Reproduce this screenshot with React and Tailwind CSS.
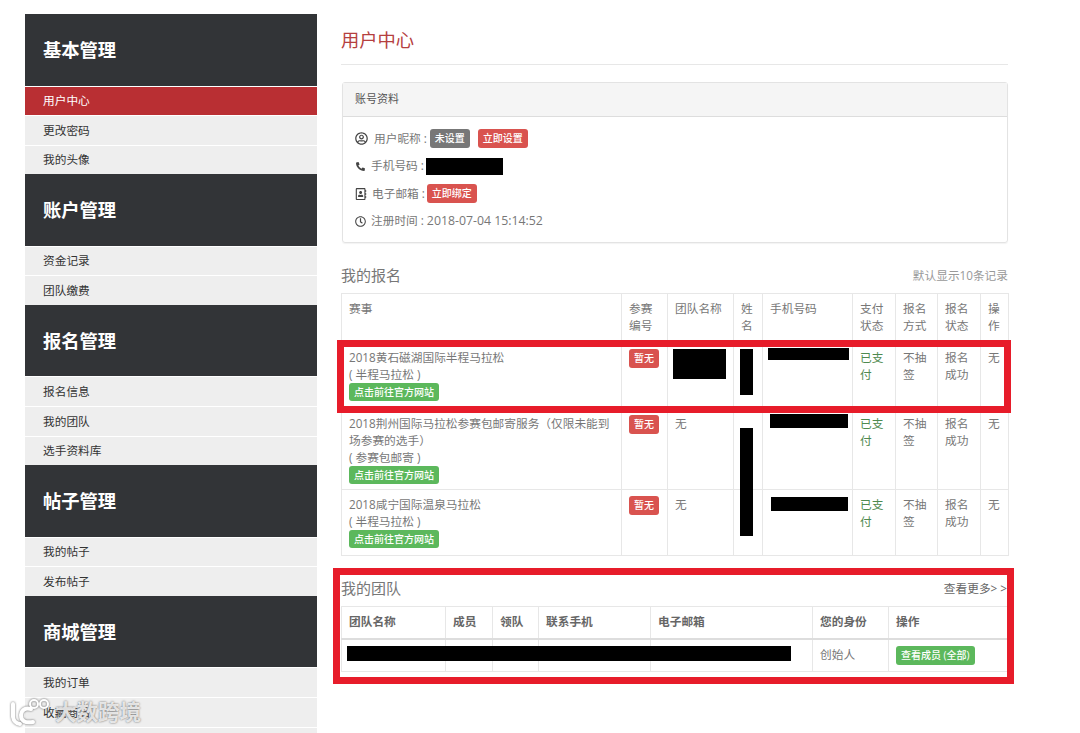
import React from 'react';
import { FaRegUserCircle, FaPhoneAlt, FaRegAddressBook, FaRegClock } from 'react-icons/fa';

const font = '[font-family:"Open_Sans","Noto_Sans_CJK_SC",sans-serif]';

const menu = [
  { title: '基本管理', items: ['用户中心', '更改密码', '我的头像'] },
  { title: '账户管理', items: ['资金记录', '团队缴费'] },
  { title: '报名管理', items: ['报名信息', '我的团队', '选手资料库'] },
  { title: '帖子管理', items: ['我的帖子', '发布帖子'] },
  { title: '商城管理', items: ['我的订单', '收藏商品', ''] },
];

const signups = [
  { name: ['2018黄石磁湖国际半程马拉松', '( 半程马拉松 )'], height: 'h-[66px]', team: true, phoneBar: 'w-[81px] h-[12px] ml-[-2px] mt-[-1px]', nameBar: true },
  { name: ['2018荆州国际马拉松参赛包邮寄服务（仅限未能到场参赛的选手）', '( 参赛包邮寄 )'], height: 'h-[81px]', phoneBar: 'w-[78px] h-[14px] mt-[-1px]' },
  { name: ['2018咸宁国际温泉马拉松', '( 半程马拉松 )'], height: 'h-[66px]', phoneBar: 'w-[77px] h-[14px] ml-px mt-[1px]' },
];

const Badge = ({ color, className = '', children }) => (
  <span className={`inline-block rounded-[3px] text-white text-[10px] leading-[18px] px-[5px] font-medium ${color} ${className}`}>
    {children}
  </span>
);

const Sidebar = () => (
  <aside className="w-[292px] shrink-0 mt-[14px]">
    {menu.map((group) => (
      <div key={group.title}>
        <div className="h-[71.5px] bg-[#323437] flex items-center pl-[18px] text-white text-[18.3px] font-bold">
          {group.title}
        </div>
        {group.items.map((item) => (
          <div
            key={item}
            className={`h-[28.6px] mt-[1px] pl-[18px] flex items-center text-[11.7px] ${
              item === '用户中心' ? 'bg-[#b92f33] text-white' : 'bg-[#eeeeee] text-[#333333]'
            }`}
          >
            {item}
          </div>
        ))}
      </div>
    ))}
  </aside>
);

const Account = () => (
  <div className="mt-[17px] border border-[#e3e3e3] rounded-[3px] shadow-[0_1px_1px_rgba(0,0,0,0.05)] h-[161px] ml-px">
    <div className="h-[34px] bg-[#f5f5f5] border-b border-[#dddddd] flex items-center pl-[12px] text-[11px] text-[#555555]">
      账号资料
    </div>
    <div className="pt-[8px] pl-[12px] text-[11.7px] text-[#777777]">
      <div className="h-[27.5px] flex items-center">
        <FaRegUserCircle className="text-[13px] text-[#444444] mr-[6px]" />
        用户昵称 :
        <Badge color="bg-[#777777]" className="ml-[3px] font-bold leading-[19px]">未设置</Badge>
        <Badge color="bg-[#d9534f]" className="ml-[8px] leading-[19px]">立即设置</Badge>
      </div>
      <div className="h-[27.5px] flex items-center">
        <FaPhoneAlt className="text-[9px] text-[#444444] ml-px mr-[6px]" />
        手机号码 :
        <span className="inline-block w-[77px] h-[17px] bg-black ml-[2px]" />
      </div>
      <div className="h-[27.5px] flex items-center">
        <FaRegAddressBook className="text-[12px] text-[#444444] mr-[5px]" />
        电子邮箱 :
        <Badge color="bg-[#d9534f]" className="ml-[2px] leading-[19px]">立即绑定</Badge>
      </div>
      <div className="h-[27.5px] flex items-center">
        <FaRegClock className="text-[11px] text-[#444444] mr-[5px]" />
        注册时间 :<span className="ml-[3px] text-[12.3px]">2018-07-04 15:14:52</span>
      </div>
    </div>
  </div>
);

const cell = 'border border-[#e7e7e7] align-top px-[7px] pt-[6px] pb-0 text-[11.7px] leading-[17px] font-normal text-left';

const SignupTable = () => (
  <table className="table-fixed w-[667px] text-[#777777]">
    <colgroup>
      <col className="w-[280px]" />
      <col className="w-[46px]" />
      <col className="w-[66px]" />
      <col className="w-[29px]" />
      <col className="w-[90px]" />
      <col className="w-[43px]" />
      <col className="w-[42px]" />
      <col className="w-[43px]" />
      <col className="w-[28px]" />
    </colgroup>
    <thead>
      <tr className="h-[49px]">
        <th className={cell}>赛事</th>
        <th className={cell}>参赛编号</th>
        <th className={cell}>团队名称</th>
        <th className={cell}>姓名</th>
        <th className={cell}>手机号码</th>
        <th className={cell}>支付状态</th>
        <th className={cell}>报名方式</th>
        <th className={cell}>报名状态</th>
        <th className={cell}>操作</th>
      </tr>
    </thead>
    <tbody>
      {signups.map((row) => (
        <tr key={row.name[0]} className={row.height}>
          <td className={cell}>
            <div>{row.name[0]}</div>
            <div>{row.name[1]}</div>
            <Badge color="bg-[#5cb85c]" className="block w-[90px] whitespace-nowrap">点击前往官方网站</Badge>
          </td>
          <td className={cell}>
            <Badge color="bg-[#d9534f]" className="font-bold align-top leading-[19px]">暂无</Badge>
          </td>
          <td className={cell}>
            {row.team ? <div className="w-[53px] h-[30px] bg-black ml-[-2px]" /> : '无'}
          </td>
          <td className={cell}>
            {row.nameBar ? <div className="w-[13px] h-[46px] bg-black ml-[-1px]" /> : null}
          </td>
          <td className={cell}>
            <div className={`bg-black ${row.phoneBar}`} />
          </td>
          <td className={`${cell} text-[#4f8a50]`}>已支付</td>
          <td className={cell}>不抽签</td>
          <td className={cell}>报名成功</td>
          <td className={cell}>无</td>
        </tr>
      ))}
    </tbody>
  </table>
);

const teamHead = 'border border-[#e7e7e7] border-b-2 border-b-[#dddddd] px-[7px] text-[11.7px] text-left font-bold text-[#666666]';
const teamCell = 'border border-[#e7e7e7] px-[7px] text-[11.7px] text-[#777777]';

const TeamTable = () => (
  <div className="relative">
    <table className="table-fixed w-[667px]">
      <colgroup>
        <col className="w-[104px]" />
        <col className="w-[47px]" />
        <col className="w-[46px]" />
        <col className="w-[112px]" />
        <col className="w-[162px]" />
        <col className="w-[76px]" />
        <col className="w-[120px]" />
      </colgroup>
      <thead>
        <tr className="h-[32px]">
          <th className={teamHead}>团队名称</th>
          <th className={teamHead}>成员</th>
          <th className={teamHead}>领队</th>
          <th className={teamHead}>联系手机</th>
          <th className={teamHead}>电子邮箱</th>
          <th className={teamHead}>您的身份</th>
          <th className={teamHead}>操作</th>
        </tr>
      </thead>
      <tbody>
        <tr className="h-[33px]">
          <td className={teamCell} />
          <td className={teamCell} />
          <td className={teamCell} />
          <td className={teamCell} />
          <td className={teamCell} />
          <td className={teamCell}>创始人</td>
          <td className={teamCell}>
            <Badge color="bg-[#5cb85c]" className="leading-[19px] px-[5px] whitespace-nowrap">查看成员 (全部)</Badge>
          </td>
        </tr>
      </tbody>
    </table>
    <div className="absolute left-[6px] top-[40px] w-[444px] h-[15px] bg-black" />
  </div>
);

const Watermark = () => (
  <div className="absolute left-[8px] top-[697px] flex items-center pointer-events-none">
    <svg width="46" height="30" viewBox="0 0 46 30" fill="none" strokeLinecap="round" className="drop-shadow-[0_0_1px_#666666]">
      <path d="M5 7 L5 20 Q6 26 12 27" stroke="#ffffff" strokeWidth="4" />
      <path d="M23 12 Q14 10 13 18 Q13 27 25 25" stroke="#ffffff" strokeWidth="4" />
      <circle cx="26" cy="7" r="4" stroke="#ffffff" strokeWidth="2" />
      <circle cx="36" cy="7" r="4" stroke="#ffffff" strokeWidth="2" />
    </svg>
    <span className="ml-[1px] text-[21.5px] leading-[28px] font-bold text-white/80 [text-shadow:0_0_2px_#555555]">大数跨境</span>
  </div>
);

const App = () => (
  <div className={`relative h-screen overflow-hidden bg-white flex pl-[25px] ${font}`}>
    <Sidebar />
    <main className="w-[667px] ml-[24px] pt-[27px]">
      <h1 className="text-[18.3px] leading-[25px] font-normal text-[#b5403f] pb-[12px] border-b border-[#e7e7e7]">用户中心</h1>
      <Account />
      <div className="mt-[22px] mb-[7px] flex items-center justify-between h-[21px] text-[#777777]">
        <span className="text-[15px]">我的报名</span>
        <span className="text-[11.7px] text-[#999999]">默认显示10条记录</span>
      </div>
      <SignupTable />
      <div className="mt-[22px] mb-[7px] flex items-center justify-between h-[21px] text-[#777777]">
        <span className="text-[15px]">我的团队</span>
        <span className="text-[11.7px] text-[#666666] mr-px">查看更多&gt; &gt;</span>
      </div>
      <TeamTable />
    </main>
    {/* 红框标注和打码都是盖在页面上的 */}
    <div className="absolute left-[740px] top-[428px] w-[13px] h-[108px] bg-black" />
    <div className="absolute left-[337px] top-[340px] w-[674px] h-[73px] border-[7px] border-[#e71c2a]" />
    <div className="absolute left-[333px] top-[568px] w-[681px] h-[116px] border-[7px] border-[#e71c2a]" />
    <Watermark />
  </div>
);

export default App;
